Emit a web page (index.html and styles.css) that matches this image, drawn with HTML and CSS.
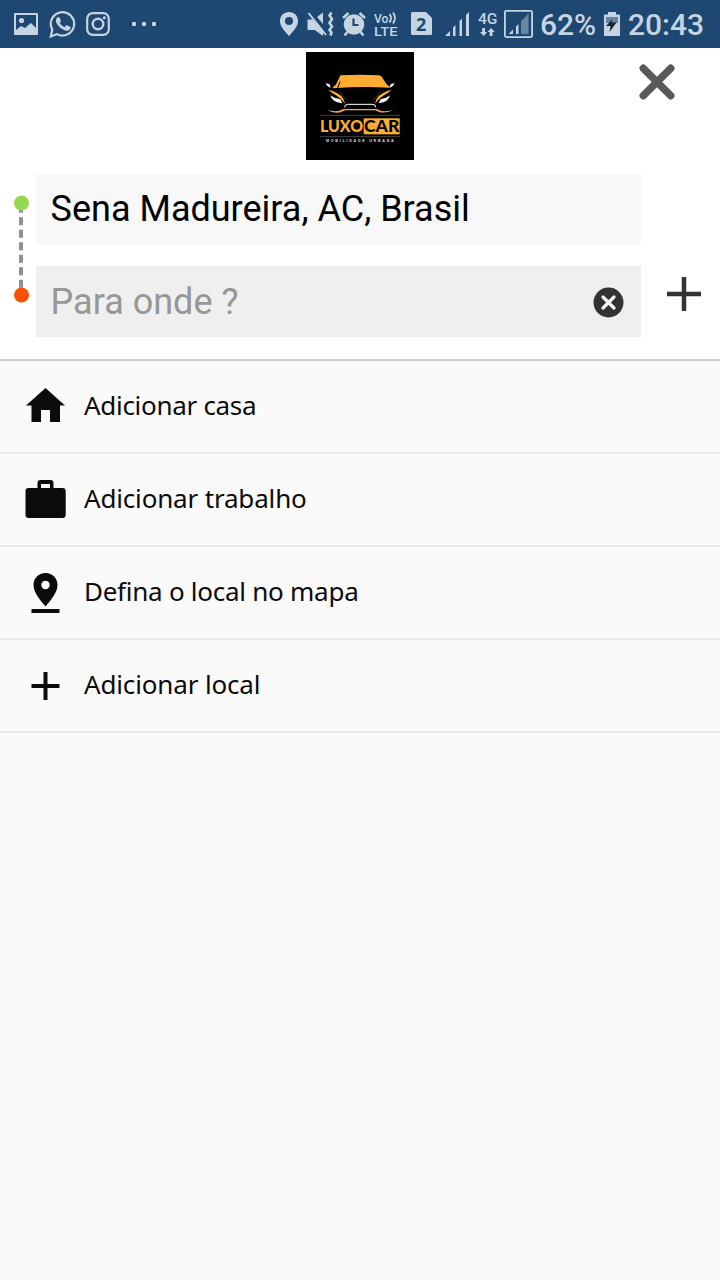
FILE: index.html
```html
<!DOCTYPE html>
<html lang="pt-BR">
<head>
<meta charset="utf-8">
<title>LuxoCar</title>
<link rel="stylesheet" href="styles.css">
</head>
<body>
<div class="statusbar">
  <svg class="s-photo" width="24" height="48" viewBox="14 0 24 48"><path fill-rule="evenodd" d="M15 13h22a1 1 0 0 1 1 1v20a1 1 0 0 1-1 1H15a1 1 0 0 1-1-1V14a1 1 0 0 1 1-1zM16 15v15l5-4 4 2 6-5 5 5V15z"/><circle cx="21.500" cy="20.500" r="2.600"/></svg>
  <svg class="s-whats" width="28" height="48" viewBox="48 0 28 48"><path class="line" d="M50.800 36.500L52.300 29.600A11.700 11.700 0 1 1 56.900 34.100Z" stroke-width="2.200"/><path d="M57.300 17.500c1-.9 2-.7 2.500.4l1.100 2.600c.2.800-.4 1.400-1.200 2.300 1 2 2.500 3.500 4.800 4.400l1.500-1.700c.4-.5.900-.4 1.400-.1l2.600 1.400c.8.400.6 1 .3 1.900-.9 2-3.300 2.400-5.300 1.700-4-1.300-6.800-4-8.700-7.600-.8-1.900-.4-4 1-5.300z"/></svg>
  <svg class="s-insta" width="24" height="48" viewBox="86 0 24 48"><rect class="line" x="87.200" y="13.200" width="21.600" height="21.600" rx="5.500" stroke-width="2.200"/><circle class="line" cx="98" cy="24" r="5.300" stroke-width="2.400"/><circle cx="104.300" cy="17.800" r="1.500"/></svg>
  <svg class="s-dots" width="24" height="48" viewBox="132 0 24 48"><rect x="132" y="22" width="4" height="4" rx="1"/><rect x="142" y="22" width="4" height="4" rx="1"/><rect x="152" y="22" width="4" height="4" rx="1"/></svg>
  <div class="status-right">
    <svg class="s-pin" width="18" height="48" viewBox="280 0 18 48"><path fill-rule="evenodd" d="M289 12c5.200 0 9 3.800 9 9 0 6-5 10-9 15.200C285 31 280 27 280 21c0-5.200 3.800-9 9-9zm0 5a4 4 0 1 0 0 8 4 4 0 0 0 0-8z"/></svg>
    <svg class="s-mute" width="27" height="48" viewBox="307 0 27 48"><path d="M307.500 19.500h5l10.500 10V36l-8.200-6h-7.300zM317 17l6-4.500V24z"/><path class="line" d="M308.500 13L326 35" stroke-width="2"/><path class="line" d="M331.500 12.500l-2 3 2.500 3.500-2.500 4 2.500 3.500-2.500 3.500 2 2.500-1 3" stroke-width="2.600"/></svg>
    <svg class="s-alarm" width="24" height="48" viewBox="342 0 24 48"><circle cx="354" cy="24.500" r="10.300"/><path class="line" d="M343 18l5.500-5M365 18l-5.500-5M347.500 32l-3 3.500M360.500 32l3 3.500" stroke-width="2.600"/><path class="cut" d="M353.500 18.500v6.500h5" stroke-width="2.200"/></svg>
    <svg class="s-volte" width="25" height="48" viewBox="374 0 25 48"><text class="tiny" x="374" y="22.500" font-size="12" textLength="14.500" lengthAdjust="spacingAndGlyphs">Vo</text><path class="line" d="M389.500 14q3 4 0 8.500M393 12.500q4 5.500 0 11" stroke-width="1.800"/><text class="tiny" x="374" y="36" font-size="13.500" textLength="23.500" lengthAdjust="spacingAndGlyphs">LTE</text></svg>
    <svg class="s-sim" width="21" height="48" viewBox="411 0 21 48"><path d="M412.500 12H426l6 6v15.500a1.500 1.500 0 0 1-1.500 1.500h-18a1.500 1.500 0 0 1-1.500-1.500v-20a1.500 1.500 0 0 1 1.500-1.500z"/><text class="sim-num" x="416" y="30.500" font-size="18">2</text></svg>
    <svg class="s-signal" width="25" height="48" viewBox="445 0 25 48"><path d="M445 36l5-5v5zM453 27.500l2.500-2.500v11H453zM459.500 21l2.500-2.500V36h-2.500zM466 15l3-3v24h-3z"/></svg>
    <svg class="s-4g" width="20" height="48" viewBox="478 0 20 48"><text class="tiny" x="478" y="24" font-size="15.500" textLength="19.500" lengthAdjust="spacingAndGlyphs">4G</text><path d="M482.200 28h2.800v4h2.200l-3.600 4-3.600-4h2.200zM489.700 36h2.800v-4h2.200l-3.600-4-3.600 4h2.200z"/></svg>
    <svg class="s-box" width="29" height="48" viewBox="504 0 29 48"><rect class="line" x="504.900" y="10.900" width="27.200" height="26.200" rx="1.500" stroke-width="1.800"/><path d="M508.500 34l4.500-4.500V34zM516 26.500l2.500-2.500v10H516z"/><path class="dim" d="M521 21.500l7.500-8V34H521z"/></svg>
    <span class="percent">62%</span>
    <svg class="s-batt" width="16" height="48" viewBox="604 0 16 48"><path d="M608 12h8v2.500h3a1 1 0 0 1 1 1V35a1 1 0 0 1-1 1h-14a1 1 0 0 1-1-1V15.500a1 1 0 0 1 1-1h3z"/><path class="level" d="M606 17h12v6h-12z"/><path class="bolt" d="M616.500 22.500h-5l1-3.500-6.500 7h4.500l-1 6z"/></svg>
    <span class="clock">20:43</span>
  </div>
</div>
<header class="header">
  <div class="topline">
    <svg class="logo" width="108" height="108" viewBox="18 18 324 324">
      <rect x="18" y="18" width="324" height="324" fill="#000"/>
      <path class="gold" d="M122 88q58-3 115 0 7 1 10 7l14 21q8 3 8 9-85-5-171 2 2-8 9-10l9-18q3-8 6-11z"/>
      <path d="M120 107l-8 22" fill="none" stroke="#000" stroke-width="3"/>
      <path class="gold" d="M85 132l12 2q17 7 27 16 9 9 11 23-12-16-27-25-12-7-23-16zM275 132l-12 2q-17 7-27 16-9 9-11 23 12-16 27-25 12-7 23-16z"/>
      <path d="M120 137q8 14 20 25M240 137q-8 14-20 25" fill="none" stroke="#7d5620" stroke-width="2"/>
      <path class="gold" d="M83 191q14 7 36 3l11-5h100l13 6q20 2 37-4-17 11-40 8l-15-6H134l-12 6q-24 4-39-8z"/>
      <path fill="#fff" d="M78 111l11 4 3 10q-12-3-14-14zM283 111l-11 4-4 10q13-3 15-14zM91 148l12 7 18 5 6 12q-32-4-36-24zM270 148l-12 7-16 5-6 12q30-4 34-24z"/>
      <path d="M134 184q0-9 8-9h77q8 0 8 9" fill="none" stroke="#fff" stroke-width="3"/>
      <path d="M60 208h240M60 272h240" stroke="#8b8b8b" stroke-width="1.500"/>
      <rect class="gold" x="191" y="217" width="108" height="48"/>
      <text class="brand gold" x="60" y="258" textLength="129" lengthAdjust="spacingAndGlyphs">LUXO</text>
      <text class="brand" x="192" y="258" textLength="106" lengthAdjust="spacingAndGlyphs">CAR</text>
      <text class="slogan" x="78" y="287" textLength="203">MOBILIDADE URBANA</text>
    </svg>
    <svg class="close" width="36" height="36" viewBox="0 0 36 36"><path d="M4.300 4.300L31.700 31.700M31.700 4.300L4.300 31.700"/></svg>
  </div>
  <div class="route">
    <svg class="track" width="16" height="109" viewBox="13 195 16 109"><path d="M21 205.800V290" stroke="#909090" stroke-width="4" stroke-dasharray="8 4.500" stroke-dashoffset="1"/><circle cx="21.500" cy="203" r="7.500" fill="#97d852"/><circle cx="21.500" cy="295" r="7.500" fill="#ff5000"/></svg>
    <div class="fields">
      <div class="field origin"><span>Sena Madureira, AC, Brasil</span></div>
      <div class="field destination"><span>Para onde ?</span>
        <svg class="clear" width="31" height="31" viewBox="0 0 31 31"><circle cx="15.500" cy="15.500" r="15" fill="#333"/><path d="M10 10L21 21M21 10L10 21" stroke="#f5f5f5" stroke-width="3.200" stroke-linecap="round"/></svg>
      </div>
    </div>
    <svg class="add-stop" width="34" height="34" viewBox="0 0 34 34"><path d="M17 0v34M0 17h34"/></svg>
  </div>
</header>
<main class="options">
  <div class="option"><svg class="icon" viewBox="25 361 42 91"><path d="M45.500 388L65 405.500h-5V422H50v-12h-9v12h-9.500v-16.500H26z"/></svg><span class="label home">Adicionar casa</span></div>
  <div class="option"><svg class="icon" viewBox="25 454 42 91"><path fill-rule="evenodd" d="M37.500 488v-5a3 3 0 0 1 3-3h10a3 3 0 0 1 3 3v5h9a3.200 3.200 0 0 1 3.200 3.200v23.600a3.200 3.200 0 0 1-3.200 3.200H28.700a3.200 3.200 0 0 1-3.200-3.200v-23.600a3.200 3.200 0 0 1 3.200-3.200zM41 484v4h9v-4z"/></svg><span class="label work">Adicionar trabalho</span></div>
  <div class="option"><svg class="icon" viewBox="25 547 42 91"><path fill-rule="evenodd" d="M45.500 573c7 0 12 5 12 12 0 8.500-9 17.500-12 21.500-3-4-12-13-12-21.500 0-7 5-12 12-12zm0 7.800a4.200 4.200 0 1 0 0 8.400 4.200 4.200 0 0 0 0-8.400zM31.500 609h28v4h-28z"/></svg><span class="label map">Defina o local no mapa</span></div>
  <div class="option"><svg class="icon" viewBox="25 640 42 91"><path d="M43.500 672h4v12h12v4h-12v12h-4v-12h-12v-4h12z"/></svg><span class="label place">Adicionar local</span></div>
</main>
</body>
</html>
```
FILE: styles.css
```css
* { box-sizing: border-box; }
body { margin: 0; width: 720px; min-height: 1280px; background: #fafafa; font-family: Roboto, "Noto Sans", sans-serif; }
svg { display: block; flex: none; }

.statusbar { display: flex; height: 48px; padding: 0 17px 0 14px; background: #1e4871; color: #c5d4e2; fill: #c5d4e2; }
.statusbar .line { fill: none; stroke: #c5d4e2; }
.statusbar .cut { fill: none; stroke: #1e4871; }
.status-right { display: flex; margin-left: 124px; }
.s-whats, .s-insta { margin-left: 10px; }
.s-dots { margin-left: 22px; }
.s-mute { margin-left: 9px; }
.s-alarm, .s-volte { margin-left: 8px; }
.s-sim { margin-left: 12px; }
.s-signal { margin-left: 13px; }
.s-4g { margin-left: 8px; }
.s-box { margin-left: 6px; }
.tiny { font-family: Roboto, sans-serif; font-weight: 500; }
.sim-num { font-family: "Noto Sans", sans-serif; font-weight: 700; fill: #1e4871; }
.statusbar .dim, .statusbar .level { fill: #6686a3; }
.statusbar .bolt { fill: #18232d; }
.percent, .clock { font-size: 30px; line-height: 50px; height: 48px; font-weight: 500; white-space: nowrap; }
.percent { width: 64px; margin-left: 7px; }
.clock { width: 76px; margin-left: 8px; }

.header { height: 313px; background: #fff; border-bottom: 2px solid #ccc; }
.topline { display: grid; grid-template-columns: 306px 108px 1fr; height: 126px; padding-top: 4px; }
.logo { grid-column: 2; }
.gold { fill: #ffad32; }
.brand { font: 900 48px Lato, sans-serif; }
.slogan { font: 700 11px "Liberation Sans", sans-serif; fill: #ddd; }
.close { margin: 12px 0 0 225px; }
.close path { stroke: #595959; stroke-width: 7.5; stroke-linecap: round; fill: none; }
.route { display: flex; padding-left: 13px; }
.track { margin: 21px 7px 0 0; }
.fields { display: flex; flex-direction: column; gap: 21px; width: 605px; }
.field { display: flex; align-items: center; justify-content: space-between; height: 71px; padding: 0 17px 2px 14.6px; font-size: 36px; line-height: 42px; }
.origin { background: #f8f8f8; color: #000; }
.destination { padding-bottom: 0; background: #efefef; color: #979797; }
.clear { margin-top: 1px; }
.add-stop { margin: 103px 0 0 26px; }
.add-stop path { stroke: #333; stroke-width: 4.5; }

.option { display: flex; align-items: center; height: 93px; padding-left: 25px; border-bottom: 2px solid #ebebeb; }
.icon { width: 42px; height: 91px; margin-right: 17px; fill: #0b0b0b; }
.label { padding-bottom: 3px; font: 400 26px/36px "Noto Sans", sans-serif; color: #0b0b0b; white-space: nowrap; }
.home { letter-spacing: -0.3px; }
.work { letter-spacing: -0.17px; }
.map { letter-spacing: -0.26px; }
.place { letter-spacing: -0.15px; }
```
